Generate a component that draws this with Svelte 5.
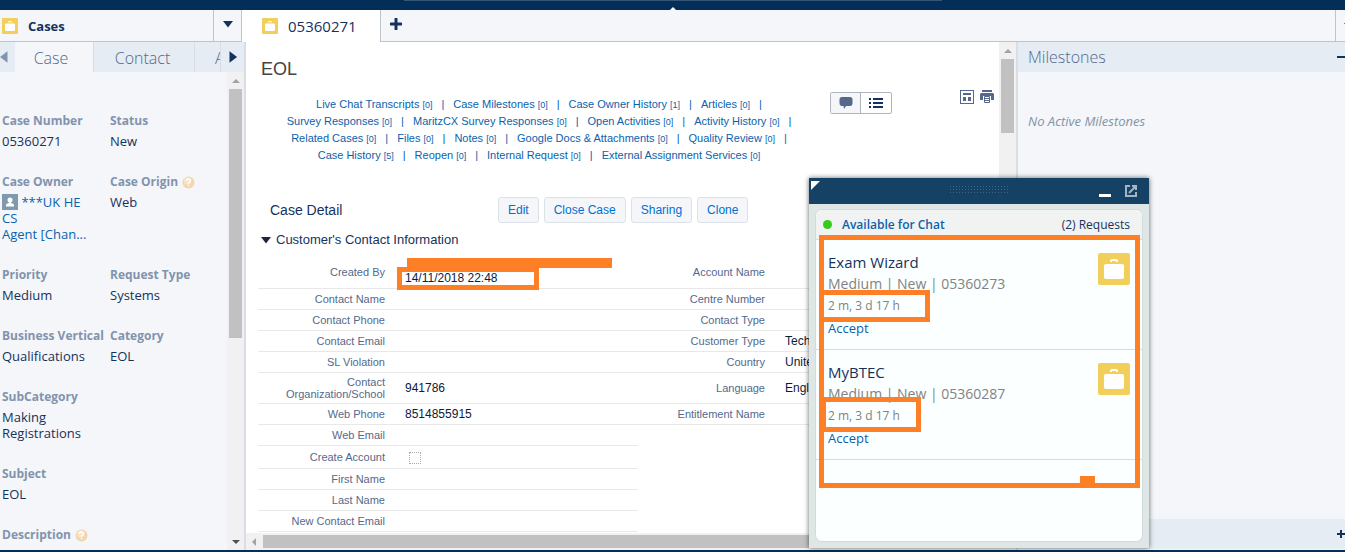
<script>
	let primaryTab = '05360271';
	let subTabs = ['Case', 'Contact', 'A'];

	const fields = [
		[{ label: 'Case Number', value: '05360271' }, { label: 'Status', value: 'New' }],
		[
			{ label: 'Case Owner', owner: true, value: '***UK HE' },
			{ label: 'Case Origin', value: 'Web', help: true }
		],
		[{ label: 'Priority', value: 'Medium' }, { label: 'Request Type', value: 'Systems' }],
		[{ label: 'Business Vertical', value: 'Qualifications' }, { label: 'Category', value: 'EOL' }],
		[{ label: 'SubCategory', value: 'Making Registrations' }],
		[{ label: 'Subject', value: 'EOL' }],
		[{ label: 'Description', value: '', help: true }]
	];

	const related = [
		[['Live Chat Transcripts', 0], ['Case Milestones', 0], ['Case Owner History', 1], ['Articles', 0]],
		[['Survey Responses', 0], ['MaritzCX Survey Responses', 0], ['Open Activities', 0], ['Activity History', 0]],
		[['Related Cases', 0], ['Files', 0], ['Notes', 0], ['Google Docs & Attachments', 0], ['Quality Review', 0]],
		[['Case History', 5], ['Reopen', 0], ['Internal Request', 0], ['External Assignment Services', 0]]
	];

	const actions = ['Edit', 'Close Case', 'Sharing', 'Clone'];

	const details = [
		['Contact Name', '', 'Centre Number', ''],
		['Contact Phone', '', 'Contact Type', ''],
		['Contact Email', '', 'Customer Type', 'Tech'],
		['SL Violation', '', 'Country', 'United'],
		['Contact Organization/School', '941786', 'Language', 'English'],
		['Web Phone', '8514855915', 'Entitlement Name', ''],
		['Web Email', ''],
		['Create Account', 'check'],
		['First Name', ''],
		['Last Name', ''],
		['New Contact Email', '']
	];

	const requests = [
		{ name: 'Exam Wizard', number: '05360273', wait: '2 m, 3 d 17 h' },
		{ name: 'MyBTEC', number: '05360287', wait: '2 m, 3 d 17 h' }
	];
</script>

{#snippet briefcase(size)}
	<svg class="briefcase" width={size} height={size} viewBox="0 0 32 32" aria-hidden="true">
		<rect width="32" height="32" rx="2" fill="#f2cf5b" />
		<path d="M13 9V8Q13 7 14 7H18Q19 7 19 8V9" fill="none" stroke="#fff" stroke-width="2" />
		<rect x="6" y="11" width="20" height="15" rx="2" fill="#fff" />
	</svg>
{/snippet}

{#snippet arrow(dir, color)}
	<svg class="arrow {dir}" width="12" height="12" viewBox="0 0 12 12" fill={color} aria-hidden="true">
		<path d="M1 3H11L6 9.500Z" />
	</svg>
{/snippet}

{#snippet help()}
	<svg class="help" width="13" height="13" viewBox="0 0 13 13" aria-hidden="true">
		<circle cx="6.500" cy="6.500" r="6" fill="#f3d5b0" />
		<circle cx="5.500" cy="5" r="3.800" fill="#f9e3c4" />
		<path d="M4.500 5Q4.500 3 6.500 3T8.500 4.800Q8.500 5.800 6.500 6.800V7.800M6.500 9V10.300" fill="none" stroke="#fff" stroke-width="1.500" />
	</svg>
{/snippet}

<div class="console">
	<div class="top-bar">
		<span class="pull-tab"></span>
	</div>

	<nav class="tab-bar">
		<div class="nav-item">{@render briefcase(16)}<strong>Cases</strong></div>
		<button class="nav-menu" aria-label="Open navigation menu">{@render arrow('down', '#16325c')}</button>
		<a class="primary-tab" href="#case">{@render briefcase(16)}<span>{primaryTab}</span></a>
		<div class="tab-fill">
			<button aria-label="New tab">
				<svg width="12" height="12" viewBox="0 0 12 12" aria-hidden="true">
					<path d="M6 1V11M1 6H11" stroke="#16325c" stroke-width="3" stroke-linecap="round" />
				</svg>
			</button>
		</div>
		<button class="overflow" aria-label="More tabs">{@render arrow('down', '#16325c')}</button>
	</nav>

	<div class="workspace">
		<aside class="left">
			<div class="sub-tabs">
				<button class="prev" aria-label="Previous">{@render arrow('west', '#8295b0')}</button>
				{#each subTabs as tab, i}
					<button class="sub-tab" class:active={i === 0} class:cut={i === 2}>{tab}</button>
				{/each}
				<button class="next" aria-label="Next">{@render arrow('east', '#16325c')}</button>
			</div>
			<div class="scroll-area">
				<div class="fields">
					{#each fields as row}
						<div class="field-row">
							{#each row as field}
								<dl>
									<dt>{field.label}{#if field.help}{@render help()}{/if}</dt>
									<dd>
										{#if field.owner}
											<a href="#owner">
												<svg class="avatar" width="16" height="16" viewBox="0 0 16 16" aria-hidden="true">
													<rect width="16" height="16" fill="#8199af" />
													<circle cx="8" cy="6" r="2.500" fill="#fff" />
													<path d="M4 12.500V11Q4 9.500 7 9V7H9V9Q12 9.500 12 11V12.500Z" fill="#fff" />
												</svg>
												{field.value}<br />CS<br />Agent [Chan...
											</a>
										{:else}
											{field.value}
										{/if}
									</dd>
								</dl>
							{/each}
						</div>
					{/each}
				</div>
				<div class="v-scroll">
					<i class="up"></i><b class="left-thumb"></b><i class="dn"></i>
				</div>
			</div>
		</aside>

		<main>
			<div class="case-scroll">
				<div class="case">
					<h1>EOL</h1>
					<div class="head">
						<div class="related">
							{#each related as line, n}
								<div>
									{#each line as [name, count], i}
										<a href="#related">{name} <small>[{count}]</small></a>
										{#if n < 3 || i < line.length - 1}<span>|</span>{/if}
									{/each}
								</div>
							{/each}
						</div>
						<div class="toggle">
							<button class="on" aria-label="Feed">
								<svg width="14" height="14" viewBox="0 0 14 14" fill="#54698d" aria-hidden="true">
									<path d="M3 1H11Q13.500 1 13.500 3.500V7Q13.500 10 11 10H7L5 13L4.500 10H3Q.5 10 .5 7V3.500Q.5 1 3 1Z" />
								</svg>
							</button>
							<button aria-label="Details">
								<svg width="14" height="12" viewBox="0 0 14 12" fill="#16325c" aria-hidden="true">
									<path d="M0 1H2V3H0ZM4 1H14V3H4ZM0 5H2V7H0ZM4 5H14V7H4ZM0 9H2V11H0ZM4 9H14V11H4Z" />
								</svg>
							</button>
						</div>
						<div class="tools">
							<button aria-label="Customize page">
								<svg width="14" height="14" viewBox="0 0 14 14" aria-hidden="true">
									<rect x=".5" y=".5" width="13" height="13" fill="#fff" stroke="#54698d" />
									<path d="M3 3H11V5H3ZM3 7H6V11H3ZM8 7H11V11H8Z" fill="#54698d" />
								</svg>
							</button>
							<button aria-label="Printable view">
								<svg width="14" height="14" viewBox="0 0 14 14" aria-hidden="true">
									<path d="M2 0H12V2H2ZM1 3H13L14 4V10H11V6H3V10H0V4Z" fill="#54698d" />
									<path d="M4.500 6.500H9.500V12.500H4.500Z" fill="#fff" stroke="#54698d" />
									<path d="M5 8.500H9M5 10.500H9" stroke="#54698d" />
								</svg>
							</button>
						</div>
					</div>

					<div class="detail-head">
						<h2>Case Detail</h2>
						{#each actions as action}
							<button>{action}</button>
						{/each}
					</div>

					<h3>{@render arrow('down', '#1b2440')}Customer's Contact Information</h3>

					<table>
						<colgroup><col class="c-label" /><col class="c-value" /><col class="c-label" /><col /></colgroup>
						<tbody>
							<tr class="created">
								<th>Created By</th>
								<td><div class="stamp">14/11/2018 22:48<span class="mark redact"></span><span class="mark date-box"></span></div></td>
								<th>Account Name</th>
								<td></td>
							</tr>
							{#each details as row}
								<tr class:tall={row[0].length > 20} class:check={row[1] === 'check'}>
									{#if row[1] === 'check'}
										<th><label for="create-account">{row[0]}</label></th>
										<td><input id="create-account" type="checkbox" disabled /></td>
									{:else}
										<th>{row[0]}</th>
										<td>{row[1]}</td>
									{/if}
									{#if row.length > 2}
										<th>{row[2]}</th>
										<td>{row[3]}</td>
									{/if}
								</tr>
							{/each}
						</tbody>
					</table>
				</div>
				<div class="v-scroll">
					<i class="up"></i><b class="case-thumb"></b>
				</div>
			</div>
			<div class="h-scroll"><i class="lt"></i><b></b></div>
		</main>

		<aside class="right">
			<header><h2>Milestones</h2><button class="minus" aria-label="Collapse"></button></header>
			<p>No Active Milestones</p>
			<footer><button class="plus" aria-label="Expand"></button></footer>
		</aside>
	</div>

	<div class="bottom-bar"></div>

	<section class="chat" aria-label="Chat requests">
		<div class="chat-title">
			<i class="corner"></i>
			<span class="grip"></span>
			<button aria-label="Minimize"><i class="dash"></i></button>
			<button aria-label="Pop out">
				<svg width="12" height="12" viewBox="0 0 12 12" fill="none" stroke="#a3b5c3" stroke-width="2" aria-hidden="true">
					<path d="M5 1H1V11H11V7M4 8L10 2M7 1H11V5" />
				</svg>
			</button>
		</div>
		<div class="chat-card">
			<div class="chat-head">
				<i></i><a href="#status">Available for Chat</a><span>(2) Requests</span>
			</div>
			{#each requests as request, i}
				<div class="request">
					<div>
						<h4>{request.name}</h4>
						<p>Medium | New | {request.number}</p>
						<p class="wait">{request.wait}<span class="mark wait-box" class:second={i === 1}></span></p>
						<a href="#accept">Accept</a>
					</div>
					{@render briefcase(32)}
				</div>
			{/each}
			<span class="mark all-box"></span>
			<span class="mark nub"></span>
		</div>
	</section>
</div>

<style>
	:global(body) {
		margin: 0;
	}

	.console {
		--navy: #16325c;
		--muted: #54698d;
		--blue: #0a62ad;
		--line: #d8dde6;
		--mark: #ff7f27;
		display: flex;
		flex-direction: column;
		height: 100vh;
		position: relative;
		overflow: hidden;
		background: #fff;
		color: var(--navy);
		font: 13px/16px 'Open Sans', 'Noto Sans', sans-serif;
	}
	.console * {
		box-sizing: border-box;
	}
	button {
		display: flex;
		align-items: center;
		justify-content: center;
		margin: 0;
		padding: 0;
		border: 0;
		background: none;
		color: inherit;
		font: inherit;
	}
	a {
		color: var(--blue);
		text-decoration: none;
	}
	svg {
		flex: none;
	}
	h1, h2, h3, h4, p, dl, dd {
		margin: 0;
		font-weight: 400;
	}
	.arrow.west,
	.arrow.east {
		width: 14px;
		height: 14px;
	}
	.arrow.west {
		transform: rotate(90deg);
	}
	.arrow.east {
		transform: rotate(-90deg);
	}

	.top-bar {
		display: flex;
		justify-content: center;
		flex: none;
		height: 10px;
		background: #032e57;
	}
	.pull-tab {
		display: flex;
		justify-content: center;
		align-items: end;
		width: 40%;
		border-top: 1px solid #35587a;
	}
	.pull-tab::after {
		content: '';
		border: 3px solid transparent;
		border-top: 0;
		border-bottom-color: #fff;
	}
	.bottom-bar {
		flex: none;
		height: 2px;
		background: #032e57;
	}

	.tab-bar {
		display: flex;
		flex: none;
		height: 32px;
	}
	.nav-item,
	.nav-menu,
	.tab-fill,
	.overflow {
		background: #f4f6f9;
		border-bottom: 1px solid #bfc3ca;
	}
	.nav-item {
		display: flex;
		align-items: center;
		gap: 10px;
		width: 213px;
		padding-left: 2px;
	}
	.nav-item strong {
		font-weight: 700;
	}
	.nav-menu {
		width: 29px;
		padding-bottom: 4px;
		border-left: 1px solid #bfc3ca;
		border-right: 1px solid #bfc3ca;
	}
	.primary-tab {
		display: flex;
		align-items: center;
		gap: 10px;
		width: 138px;
		padding-left: 20px;
		color: var(--navy);
		font-size: 15px;
	}
	.tab-fill {
		display: flex;
		flex: 1;
		padding: 0 0 3px 9px;
		border-left: 1px solid #bfc3ca;
	}
	.overflow {
		width: 10px;
		padding-left: 7px;
		overflow: hidden;
		justify-content: flex-start;
		border-left: 1px solid #bfc3ca;
	}

	.workspace {
		display: flex;
		flex: 1;
		min-height: 0;
	}
	.left {
		display: flex;
		flex-direction: column;
		flex: none;
		width: 246px;
		background: #f4f6f9;
		border-right: 2px solid var(--line);
	}
	.sub-tabs {
		display: flex;
		flex: none;
		height: 30px;
		background: #e5ecf4;
	}
	.sub-tab {
		width: 101px;
		padding: 2px 3px 0 0;
		border-right: 1px solid var(--line);
		color: var(--muted);
		font-size: 16px;
		font-weight: 300;
	}
	.sub-tab.active {
		width: 79px;
		padding-right: 6px;
		background: #f4f6f9;
	}
	.sub-tab.cut {
		width: 26px;
		padding-left: 20px;
		justify-content: flex-start;
		overflow: hidden;
	}
	.prev {
		width: 15px;
		padding-right: 8px;
	}
	.next {
		flex: 1;
	}
	.scroll-area {
		display: flex;
		flex: 1;
		min-height: 0;
	}
	.fields {
		flex: 1;
		padding: 41px 0 0 2px;
		overflow: hidden;
	}
	.field-row {
		display: grid;
		grid-template-columns: 108px 1fr;
		margin-bottom: 25px;
	}
	dt {
		display: flex;
		align-items: center;
		gap: 4px;
		margin-bottom: 4px;
		color: #8293ae;
		font-size: 12px;
		font-weight: 700;
		white-space: nowrap;
	}
	dd {
		max-width: 100px;
	}
	dd a {
		display: block;
	}
	.avatar {
		vertical-align: top;
	}

	.v-scroll {
		display: flex;
		flex-direction: column;
		align-items: center;
		flex: none;
		width: 17px;
		background: #f1f1f1;
	}
	.v-scroll b {
		width: 13px;
		background: #c1c1c1;
	}
	.v-scroll i {
		border: 4px solid transparent;
	}
	.v-scroll .up {
		margin: 7px 0 6px;
		border-top: 0;
		border-bottom-color: #a3a3a3;
	}
	.v-scroll .dn {
		margin: auto 0 6px;
		border-bottom: 0;
		border-top-color: #505050;
	}
	.left-thumb {
		height: 52%;
	}
	.case-thumb {
		height: 15%;
	}
	.h-scroll {
		display: flex;
		align-items: center;
		flex: none;
		height: 17px;
		background: #f1f1f1;
	}
	.h-scroll .lt {
		margin: 0 7px 0 6px;
		border: 4px solid transparent;
		border-left: 0;
		border-right-color: #a3a3a3;
	}
	.h-scroll b {
		flex: 1;
		height: 13px;
		margin-right: 17px;
		background: #c1c1c1;
	}

	main {
		display: flex;
		flex-direction: column;
		flex: 1;
		min-width: 0;
		font-family: 'Liberation Sans', Arial, sans-serif;
	}
	.case-scroll {
		display: flex;
		flex: 1;
		min-height: 0;
	}
	.case {
		flex: 1;
		min-width: 0;
		padding: 16px 5px 0 12px;
		overflow: hidden;
	}
	h1 {
		padding-left: 3px;
		color: #444;
		font-size: 18px;
		line-height: 22px;
	}
	.head {
		display: flex;
		align-items: flex-start;
		height: 84px;
		margin-top: 10px;
	}
	.related {
		flex: none;
		width: 562px;
		padding-top: 6px;
		font-size: 11px;
		line-height: 17px;
	}
	.related div {
		display: flex;
		justify-content: center;
		height: 17px;
		white-space: nowrap;
	}
	.related span {
		margin: 0 9px;
		color: var(--blue);
	}
	.related span:last-child {
		margin-right: 0;
	}
	small {
		font-size: 9px;
		line-height: 9px;
	}
	.toggle {
		display: flex;
		margin: 2px auto 0 10px;
		border: 1px solid #b0b5bd;
		border-radius: 2px;
	}
	.toggle button {
		width: 30px;
		height: 20px;
	}
	.toggle .on {
		background: #f4f6f9;
		border-right: 1px solid #b0b5bd;
	}
	.tools {
		display: flex;
		gap: 6px;
	}

	.detail-head {
		display: flex;
		align-items: center;
		gap: 5px;
		margin-top: 23px;
		padding-left: 12px;
	}
	.detail-head h2 {
		width: 223px;
		font-size: 14px;
	}
	.detail-head button {
		height: 26px;
		padding: 0 9px;
		background: #f4f6f9;
		border: 1px solid #dde2ea;
		border-radius: 3px;
		color: #0070d2;
		font-size: 12px;
	}
	h3 {
		display: flex;
		align-items: center;
		gap: 4px;
		margin-top: 9px;
		padding-left: 2px;
		font-size: 13px;
	}

	table {
		width: 100%;
		margin-top: 8px;
		table-layout: fixed;
		border-spacing: 0;
	}
	.c-label {
		width: 127px;
	}
	.c-value {
		width: 253px;
	}
	th,
	td {
		height: 21px;
		padding: 0;
		border-bottom: 1px solid #e8e8e8;
		line-height: 12px;
	}
	th {
		color: var(--muted);
		font-size: 11px;
		font-weight: 400;
		text-align: right;
	}
	td {
		padding-left: 20px;
		color: #0b1b40;
		font-size: 12px;
		white-space: nowrap;
	}
	.created th,
	.created td {
		height: 33px;
	}
	.tall th,
	.tall td {
		height: 31px;
	}
	.check th,
	.check td {
		height: 23px;
	}
	.stamp {
		position: relative;
		padding-top: 12px;
	}
	td input {
		display: block;
		width: 12px;
		height: 12px;
		margin: 1px 4px 0;
		appearance: none;
		border: 1px dotted #aaa;
	}

	.right {
		display: flex;
		flex-direction: column;
		flex: none;
		width: 329px;
		background: #f4f6f9;
		border-left: 2px solid var(--line);
	}
	.right header,
	.right footer {
		display: flex;
		align-items: center;
		justify-content: space-between;
		height: 30px;
		padding-left: 10px;
		background: #e5ecf4;
	}
	.right h2 {
		color: var(--muted);
		font-size: 16px;
		font-weight: 300;
	}
	.right p {
		padding: 41px 10px;
		color: #8392a8;
		font-size: 13px;
		font-style: italic;
	}
	.right footer {
		justify-content: flex-end;
		height: 31px;
		margin-top: auto;
		border-bottom: 1px solid #f4f6f9;
	}
	.minus,
	.plus {
		width: 8px;
		height: 8px;
		background: linear-gradient(var(--navy), var(--navy)) center / 8px 2px no-repeat;
	}
	.plus {
		background:
			linear-gradient(var(--navy), var(--navy)) center / 8px 2px no-repeat,
			linear-gradient(var(--navy), var(--navy)) center / 2px 8px no-repeat;
	}

	/* docked chat window */
	.chat {
		position: absolute;
		right: 196px;
		bottom: 4px;
		display: flex;
		flex-direction: column;
		width: 340px;
		height: 370px;
		background: #dfe7e6;
		box-shadow: 0 0 5px rgba(0, 0, 0, 0.6);
	}
	.chat-title {
		display: flex;
		align-items: center;
		height: 26px;
		padding: 0 12px 0 2px;
		background: #154264;
	}
	.corner {
		align-self: flex-start;
		margin: 3px 0 0;
		border-top: 9px solid #fff;
		border-right: 9px solid transparent;
	}
	.grip {
		width: 60px;
		height: 8px;
		margin: 0 auto 4px 129px;
		background: radial-gradient(#42657f 1px, transparent 1px) 0 0 / 3px 3px;
	}
	.dash {
		width: 12px;
		height: 3px;
		margin: 8px 14px 0 0;
		background: #fff;
	}
	.chat-card {
		position: relative;
		flex: 1;
		margin: 5px 6px 6px;
		background: #fbffff;
		border: 1px solid #d3dada;
		border-radius: 7px;
	}
	.chat-head {
		display: flex;
		align-items: center;
		height: 30px;
		padding: 0 12px 0 7px;
		background: #f1f3f3;
		border-bottom: 1px solid #d8dddd;
		border-radius: 7px 7px 0 0;
		font-size: 12px;
	}
	.chat-head i {
		width: 9px;
		height: 9px;
		margin-right: 10px;
		background: #35cd17;
		border-radius: 50%;
	}
	.chat-head a {
		font-weight: 600;
	}
	.chat-head span {
		margin-left: auto;
	}
	.request {
		display: flex;
		justify-content: space-between;
		height: 110px;
		padding: 11px 12px 0;
		border-bottom: 1px solid #d5dddd;
		line-height: 22px;
	}
	.request .briefcase {
		margin-top: 2px;
	}
	.request h4 {
		font-size: 15px;
	}
	.request p {
		color: #828282;
		font-size: 14px;
	}
	.request .wait {
		position: relative;
		font-size: 12px;
	}

	.mark {
		position: absolute;
		border: 5px solid var(--mark);
	}
	.redact {
		left: 2px;
		top: -2px;
		width: 205px;
		height: 10px;
	}
	.date-box {
		left: -8px;
		top: 7px;
		width: 142px;
		height: 23px;
	}
	.wait-box {
		left: -9px;
		top: -5px;
		width: 111px;
		height: 32px;
	}
	.wait-box.second {
		left: -7px;
		top: -8px;
		width: 100px;
		height: 35px;
	}
	.all-box {
		left: 3px;
		top: 25px;
		width: 321px;
		height: 253px;
	}
	.nub {
		left: 264px;
		top: 266px;
		width: 15px;
		height: 12px;
		background: var(--mark);
	}
</style>
